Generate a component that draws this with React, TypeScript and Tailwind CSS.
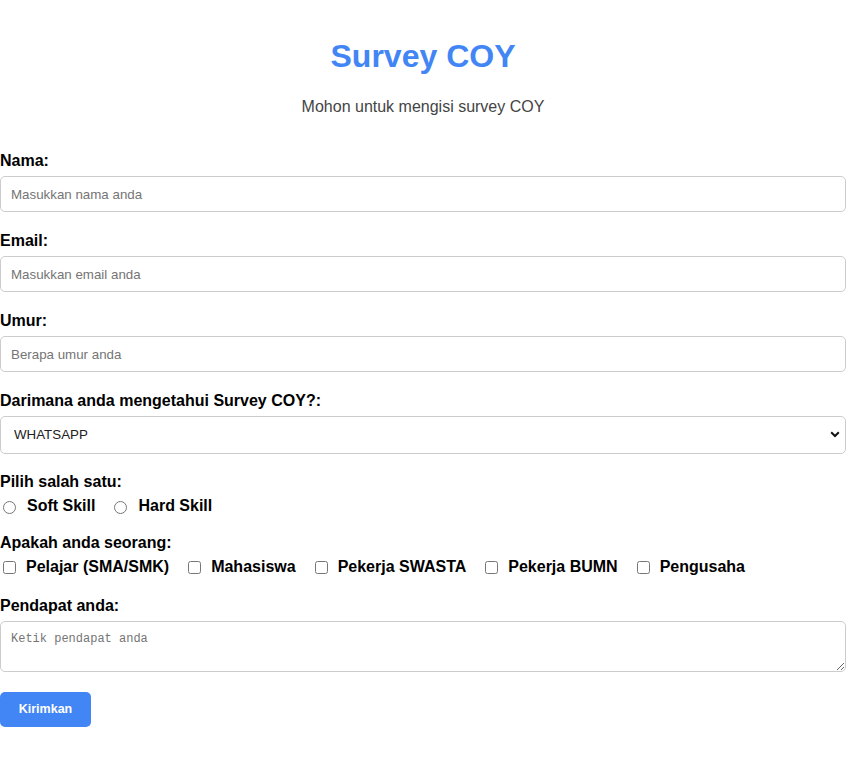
import { useState } from 'react'

const sources = ['WHATSAPP', 'INSTAGRAM', 'FACEBOOK', 'TEMAN']
const skills = ['Soft Skill', 'Hard Skill']
const statuses = ['Pelajar (SMA/SMK)', 'Mahasiswa', 'Pekerja SWASTA', 'Pekerja BUMN', 'Pengusaha']

const inputClass =
  'w-full h-[36px] border border-[#ccc] rounded-[5px] px-[10px] text-[13.33px] text-[#222] placeholder:text-[#757575] outline-none bg-white'

function Label({ children }: { children: React.ReactNode }) {
  return <label className="block text-[16px] leading-[18px] font-bold text-black mb-[6px]">{children}</label>
}

export default function App() {
  const [source, setSource] = useState('WHATSAPP')
  const [skill, setSkill] = useState('')
  const [checked, setChecked] = useState<string[]>([])

  const toggle = (v: string) =>
    setChecked(prev => (prev.includes(v) ? prev.filter(x => x !== v) : [...prev, v]))

  return (
    <div className="min-h-screen bg-white font-['Liberation_Sans',Arial,sans-serif] pt-[38px]">
      <h1 className="text-center text-[32px] leading-[37px] font-bold text-[#4285f4]">Survey COY</h1>
      <p className="text-center text-[16px] leading-[18px] text-[#444] mt-[23px]">Mohon untuk mengisi survey COY</p>

      <form className="mt-[36px]" onSubmit={e => e.preventDefault()}>
        <div className="mb-[20px]">
          <Label>Nama:</Label>
          <input type="text" placeholder="Masukkan nama anda" className={inputClass} />
        </div>

        <div className="mb-[20px]">
          <Label>Email:</Label>
          <input type="email" placeholder="Masukkan email anda" className={inputClass} />
        </div>

        <div className="mb-[20px]">
          <Label>Umur:</Label>
          <input type="number" placeholder="Berapa umur anda" className={inputClass} />
        </div>

        <div className="mb-[19px]">
          <Label>Darimana anda mengetahui Survey COY?:</Label>
          <div className="relative">
            <select
              value={source}
              onChange={e => setSource(e.target.value)}
              className="w-full h-[38px] appearance-none border border-[#ccc] rounded-[5px] pl-[13px] pr-8 text-[13.33px] text-[#222] bg-white outline-none"
            >
              {sources.map(s => (
                <option key={s} value={s}>{s}</option>
              ))}
            </select>
            <svg
              className="absolute right-[6px] top-[15px] pointer-events-none"
              width="10"
              height="7"
              viewBox="0 0 10 7"
              fill="none"
            >
              <path d="M1.2 1.3 L5 5 L8.8 1.3" stroke="#111" strokeWidth="2" />
            </svg>
          </div>
        </div>

        <div className="mb-[19px]">
          <Label>Pilih salah satu:</Label>
          <div className="flex items-center h-[18px]">
            {skills.map(s => (
              <label key={s} className="flex items-center mr-[16px] text-[16px] leading-[18px] font-bold text-black">
                <input
                  type="radio"
                  name="skill"
                  checked={skill === s}
                  onChange={() => setSkill(s)}
                  className="ml-[3px] mr-[11px] w-[13px] h-[13px] mt-[2px]"
                />
                {s}
              </label>
            ))}
          </div>
        </div>

        <div className="mb-[21px]">
          <Label>Apakah anda seorang:</Label>
          <div className="flex items-center h-[18px]">
            {statuses.map(s => (
              <label key={s} className="flex items-center mr-[16px] text-[16px] leading-[18px] font-bold text-black">
                <input
                  type="checkbox"
                  checked={checked.includes(s)}
                  onChange={() => toggle(s)}
                  className="ml-[3px] mr-[10px] w-[13px] h-[13px]"
                />
                {s}
              </label>
            ))}
          </div>
        </div>

        <div className="mb-[20px]">
          <Label>Pendapat anda:</Label>
          <textarea
            placeholder="Ketik pendapat anda"
            className="block w-full h-[51px] border border-[#ccc] rounded-[5px] px-[10px] py-[10px] font-['Liberation_Mono',monospace] text-[12px] leading-[14px] text-[#222] placeholder:text-[#757575] outline-none"
          />
        </div>

        <button
          type="submit"
          className="w-[91px] h-[35px] rounded-[5px] bg-[#4285f4] text-white text-[12.5px] font-bold"
        >
          Kirimkan
        </button>
      </form>
    </div>
  )
}
